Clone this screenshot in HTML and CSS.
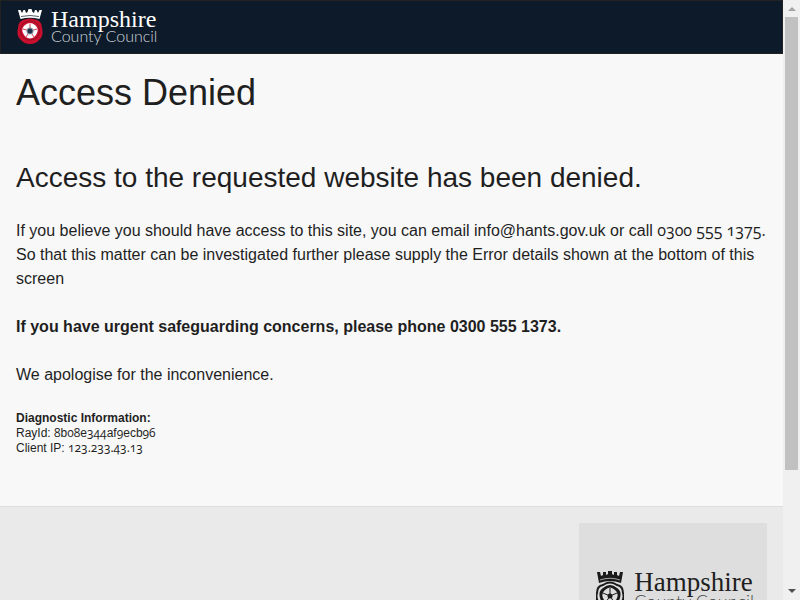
FILE: index.html
```html
<!DOCTYPE html>
<html lang="en">
<head>
<meta charset="utf-8">
<title>Access Denied</title>
<link rel="stylesheet" href="styles.css">
</head>
<body>
<div class="window">
  <div class="page">
    <header class="site-header">
      <svg class="crest" viewBox="0 0 26 36" aria-hidden="true">
        <path fill="#fff" d="M1 1l2.500 0 1.500 3 1.500-3 1.500 0 1 3 1.500-1 1-3 3 0 1 3 1.500 1 1-3 1.500 0 1.500 3 1.500-3 2.500 0-2.500 9Q13 7.500 3.500 10Z"/>
        <path fill="none" stroke="#0d1a29" stroke-width=".7" d="M4 7.500Q13 5.500 22 7.500"/>
        <path fill="#c8102e" d="M6 11Q13 8 20 11Q25 13 25 19Q27 27 22 31Q19 35 13 35Q7 35 4 31Q-1 27 1 19Q1 13 6 11Z"/>
        <path fill="none" stroke="#8a0f22" stroke-width=".8" d="M7 14Q13 10 19 14Q24 18 22 25Q19 31 13 31Q7 31 4 25Q2 18 7 14Z"/>
        <path fill="#fff" d="M8 16Q13 12 18 16Q22 19 20 24Q18 29 13 29.500Q8 29 6 24Q4 19 8 16Z"/>
        <path stroke="#c8102e" stroke-width=".8" d="M13 22V14.500M13 22l7-2M13 22l4 6M13 22l-4 6M13 22l-7-2"/>
        <circle cx="13" cy="22" r="3.500" fill="#8c9aa6"/>
        <circle cx="13" cy="22" r="2.500" fill="#1d3347"/>
      </svg>
      <div class="wordmark">
        <span class="county">Hampshire</span>
        <span class="council">County Council</span>
      </div>
    </header>
    <main class="content">
      <h1>Access Denied</h1>
      <h2>Access to the requested website has been denied.</h2>
      <p>If you believe you should have access to this site, you can email info@hants.gov.uk or call <span class="num">0300 555 1375.</span> So that this matter can be investigated further please supply the Error details shown at the bottom of this screen</p>
      <p><strong>If you have urgent safeguarding concerns, please phone 0300 555 1373.</strong></p>
      <p>We apologise for the inconvenience.</p>
      <div class="diagnostics">
        <strong>Diagnostic Information:</strong><br>
        RayId: <span class="num">8</span>b<span class="num">08</span>e<span class="num">344</span>af<span class="num">9</span>ecb<span class="num">96</span><br>
        Client IP: <span class="num">123.233.43.13</span>
      </div>
    </main>
    <footer class="site-footer">
      <div class="footer-card">
        <svg class="crest" viewBox="0 0 28 40" aria-hidden="true">
          <path fill="#1b1b1b" d="M1 1l3 0 1 4 2-1 0-3 3 0 0 3 2-1 0-3 4 0 0 3 2 1 0-3 3 0 0 3 2 1 1-4 3 0-2 11Q14 8 3 12Z"/>
          <path fill="none" stroke="#dedede" stroke-width=".7" d="M4 9Q14 5.500 24 9"/>
          <path fill="#dedede" stroke="#1b1b1b" stroke-width="2" d="M7 14Q14 9 21 14Q27 15 27 22Q29 28 24 33Q20 39 14 39Q8 39 4 33Q-1 28 1 22Q1 15 7 14Z"/>
          <path fill="#1b1b1b" d="M7 17Q14 11 21 17Q26 20 24 27Q22 34 14 35Q6 34 4 27Q2 20 7 17Z"/>
          <path fill="#dedede" d="M9 19Q14 14 19 19Q23 22 21 27Q19 32 14 32Q9 32 7 27Q5 22 9 19Z"/>
          <path stroke="#1b1b1b" d="M14 25V17M14 25l7-3M14 25l4 6M14 25l-4 6M14 25l-7-3"/>
          <circle cx="14" cy="25" r="2.500" fill="#1b1b1b"/>
        </svg>
        <div class="wordmark">
          <span class="county">Hampshire</span>
          <span class="council">County Council</span>
        </div>
      </div>
    </footer>
  </div>
  <div class="scrollbar" aria-hidden="true">
    <svg class="arrow" viewBox="0 0 17 17"><path fill="#a3a3a3" d="M5 11l4-4 4 4Z"/></svg>
    <div class="track"><div class="thumb"></div></div>
    <svg class="arrow" viewBox="0 0 17 17"><path fill="#505050" d="M5 6h8l-4 4Z"/></svg>
  </div>
</div>
</body>
</html>
```
FILE: styles.css
```css
* {
  box-sizing: border-box;
}

body {
  margin: 0;
  background: #f8f8f8;
  color: #1f1f1f;
  font: 16px/24px "Liberation Sans", Arial, sans-serif;
}

.window {
  display: flex;
  height: 100vh;
  overflow: hidden;
}

.page {
  flex: 1;
  min-width: 0;
  overflow: hidden;
}

.site-header {
  display: flex;
  gap: 8px;
  height: 54px;
  padding: 8px 16px;
  background: #0d1a29;
  border: 1px solid #222;
  color: #fff;
}

.crest {
  display: block;
  flex: none;
  width: 26px;
  height: 36px;
}

.wordmark {
  display: flex;
  flex-direction: column;
  white-space: nowrap;
}

.county {
  font: 24px/20px "Liberation Serif", serif;
}

.council {
  color: #cfd6dc;
  font: 300 16px/14px Lato, sans-serif;
}

.content {
  padding: 17px 16px 50px;
}

h1,
h2 {
  margin: 0;
  font-weight: 400;
}

h1 {
  margin-bottom: 46px;
  font-size: 36px;
  line-height: 44px;
}

h2 {
  margin-bottom: 24px;
  font-size: 28px;
  line-height: 34px;
}

p {
  margin: 0 0 24px;
}

.num {
  font-family: "Open Sans", sans-serif;
  font-variant-numeric: oldstyle-nums;
  line-height: 1;
}

.diagnostics {
  font-size: 12px;
  line-height: 15px;
}

.site-footer {
  display: flex;
  justify-content: flex-end;
  padding: 16px;
  background: #eaeaea;
  border-top: 1px solid #ddd;
}

.footer-card {
  display: flex;
  gap: 10px;
  padding: 48px 13px 48px 17px;
  background: #dedede;
}

.footer-card .crest {
  width: 28px;
  height: 40px;
}

.footer-card .county {
  font-size: 27px;
  line-height: 22px;
}

.footer-card .council {
  color: #444;
  font-size: 18px;
  line-height: 16px;
}

.scrollbar {
  display: flex;
  flex: none;
  flex-direction: column;
  width: 17px;
  background: #f0f0f0;
}

.arrow {
  display: block;
  width: 17px;
  height: 17px;
}

.track {
  flex: 1;
  padding: 0 2px;
}

.thumb {
  height: 80%;
  background: #c1c1c1;
}
```
